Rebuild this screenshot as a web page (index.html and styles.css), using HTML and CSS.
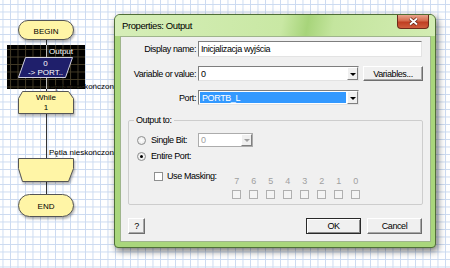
FILE: index.html
```html
<!DOCTYPE html>
<html lang="pl">
<head>
    <meta charset="UTF-8">
    <meta name="viewport" content="width=device-width, initial-scale=1.0">
    <title>Properties: Output</title>
    <link rel="stylesheet" href="styles.css">
</head>
<body>
    <!-- Schemat blokowy -->
    <svg class="chart" width="170" height="268" viewBox="0 0 170 268">
        <defs>
            <pattern id="darkGrid" width="7.5" height="7.5" patternUnits="userSpaceOnUse" x="2.5" y="4">
                <rect width="7.5" height="7.5" fill="#000"/>
                <path d="M0 0.5H7.5M0.5 0V7.5" stroke="#423a26"/>
            </pattern>
        </defs>

        <path class="link" d="M46.5 39V91M46.5 113V158M46.5 181V194"/>

        <rect class="node" x="18.5" y="20.5" width="55" height="19" rx="9.5"/>
        <text x="46" y="33.5">BEGIN</text>

        <!-- zaznaczony blok -->
        <rect x="7" y="45" width="78" height="44" fill="url(#darkGrid)"/>
        <path d="M46.5 45V57M46.5 77V89" stroke="#bbb"/>
        <text class="caption light" x="49" y="54">Output</text>
        <polygon class="io" points="25.5,57.5 72.5,57.5 65.5,77.5 18.5,77.5"/>
        <text class="light" x="45.5" y="65.5">0</text>
        <text class="light" x="45.5" y="75">-&gt; PORT..</text>
        <text class="caption" x="49" y="89">Pętla nieskończona</text>

        <polygon class="node" points="22.5,91.5 68.5,91.5 73.5,98.5 73.5,113.5 18.5,113.5 18.5,98.5"/>
        <text x="46" y="99.5">While</text>
        <text x="46" y="110">1</text>

        <text class="caption" x="49" y="155">Pętla nieskończona</text>
        <polygon class="node" points="18.5,158.5 73.5,158.5 73.5,168.5 68.5,181.5 22.5,181.5 18.5,168.5"/>

        <rect class="node" x="18.5" y="194.5" width="55" height="22" rx="11"/>
        <text x="46" y="208.5">END</text>
    </svg>

    <!-- Okno właściwości -->
    <div class="dialog">
        <div class="titlebar">
            <span class="title">Properties: Output</span>
            <button class="close">
                <svg width="11" height="9" viewBox="0 0 11 9">
                    <path d="M2 1.5L9 7.5M9 1.5L2 7.5" stroke="#5a2010" stroke-width="3.2"/>
                    <path d="M2 1.5L9 7.5M9 1.5L2 7.5" stroke="#fff" stroke-width="1.8"/>
                </svg>
            </button>
        </div>

        <div class="client">
            <div class="form">
                <label>Display name:</label>
                <div class="field wide">Inicjalizacja wyjścia</div>

                <label>Variable or value:</label>
                <div class="combo"><span class="value">0</span><span class="arrow"></span></div>
                <button class="btn vars">Variables...</button>

                <label>Port:</label>
                <div class="combo"><span class="value selected">PORTB_L</span><span class="arrow"></span></div>
            </div>

            <fieldset class="group">
                <legend>Output to:</legend>
                <div class="opt first">
                    <span class="radio"></span>
                    <span class="opt-label">Single Bit:</span>
                    <div class="combo small disabled"><span class="value">0</span><span class="arrow"></span></div>
                </div>
                <div class="opt">
                    <span class="radio on"></span>
                    <span>Entire Port:</span>
                </div>
                <div class="mask-row">
                    <div class="opt mask">
                        <span class="check"></span>
                        <span>Use Masking:</span>
                    </div>
                    <div class="bits">
                        <div class="bit"><span>7</span><span class="check"></span></div>
                        <div class="bit"><span>6</span><span class="check"></span></div>
                        <div class="bit"><span>5</span><span class="check"></span></div>
                        <div class="bit"><span>4</span><span class="check"></span></div>
                        <div class="bit"><span>3</span><span class="check"></span></div>
                        <div class="bit"><span>2</span><span class="check"></span></div>
                        <div class="bit"><span>1</span><span class="check"></span></div>
                        <div class="bit"><span>0</span><span class="check"></span></div>
                    </div>
                </div>
            </fieldset>

            <div class="actions">
                <button class="btn help">?</button>
                <button class="btn default">OK</button>
                <button class="btn">Cancel</button>
            </div>
        </div>
    </div>
</body>
</html>
```

FILE: styles.css
```css
* {
    box-sizing: border-box;
}

body {
    margin: 0;
    width: 450px;
    height: 268px;
    overflow: hidden;
    position: relative;
    font-family: "Liberation Sans", Arial, sans-serif;
    background-color: #fff;
    background-image:
        linear-gradient(#cbdaf0 1px, transparent 1px),
        linear-gradient(90deg, #cbdaf0 1px, transparent 1px);
    background-size: 7.5px 7.5px;
    background-position: 2.5px 4px;
}

/* schemat */
.chart {
    display: block;
}

.chart text {
    font-size: 8px;
    text-anchor: middle;
    fill: #000;
}

.chart .caption {
    text-anchor: start;
}

.chart .light {
    fill: #fff;
}

.node {
    fill: #fff5a6;
    stroke: #555;
    filter: drop-shadow(1px 2px 1px rgba(0,0,0,0.3));
}

.link {
    stroke: #333;
    fill: none;
}

.io {
    fill: #1f1f6b;
    stroke: #d0d0e0;
}

/* okno */
.dialog {
    position: absolute;
    left: 114px;
    top: 14px;
    width: 322px;
    height: 234px;
    display: flex;
    flex-direction: column;
    border: 1px solid #4f6e37;
    border-radius: 6px 6px 4px 4px;
    background: #a9d67c;
    box-shadow: 2px 3px 7px rgba(0,0,0,0.55);
    font-size: 9px;
    letter-spacing: -0.4px;
    color: #000;
}

.titlebar {
    height: 21px;
    display: flex;
    align-items: center;
    border-radius: 5px 5px 0 0;
    background: linear-gradient(100deg, #d6eeb8 0%, #c9e8a4 52%, #a7d47a 60%, #c4e59e 68%, #d3ecb3 100%);
}

.title {
    padding-left: 7px;
    font-size: 9.5px;
}

.close {
    align-self: flex-start;
    margin-left: auto;
    margin-right: 6px;
    width: 32px;
    height: 14px;
    padding: 0;
    display: flex;
    align-items: center;
    justify-content: center;
    border: 1px solid #6e2a1a;
    border-top: none;
    border-radius: 0 0 4px 4px;
    background: linear-gradient(#e9a48c, #d46a4c 45%, #bf3f22 55%, #cf5d3c);
}

.client {
    flex: 1;
    margin: 0 4px 5px 5px;
    display: flex;
    flex-direction: column;
    background: #f0f0f0;
    border: 1px solid #9fb58c;
}

.form {
    display: grid;
    grid-template-columns: 75px 161px 62px;
    grid-template-rows: 16px 15px 15px;
    column-gap: 2px;
    row-gap: 9px;
    margin-top: 4px;
}

.form label {
    text-align: right;
    align-self: center;
}

.field,
.combo {
    display: flex;
    align-items: center;
    background: #fff;
    border: 1px solid;
    border-color: #7e7e7e #e3e3e3 #e3e3e3 #7e7e7e;
}

.field {
    padding-left: 2px;
}

.wide {
    grid-column: 2 / 4;
    margin-right: 1px;
}

.combo .value {
    flex: 1;
    padding-left: 2px;
}

.combo .selected {
    align-self: stretch;
    display: flex;
    align-items: center;
    margin: 1px;
    background: #3399ff;
    color: #fff;
}

.arrow {
    width: 11px;
    align-self: stretch;
    display: flex;
    align-items: center;
    justify-content: center;
    background: #f0f0f0;
    border: 1px solid;
    border-color: #fff #808080 #808080 #fff;
}

.arrow::after {
    content: "";
    border: 3px solid transparent;
    border-top: 3px solid #000;
    border-bottom: 0;
    margin-top: 1px;
}

.btn {
    height: 16px;
    padding: 0;
    font: inherit;
    letter-spacing: inherit;
    color: #000;
    background: #f0f0f0;
    border: 1px solid;
    border-color: #fff #6e6e6e #6e6e6e #fff;
    box-shadow: inset -1px -1px #a8a8a8;
}

.vars {
    width: 60px;
    height: 15px;
    justify-self: end;
}

/* grupa */
.group {
    margin: 10px 7px 0 7px;
    padding: 0 0 5px 8px;
    border: 1px solid #cdcdcd;
    border-radius: 2px;
    min-width: 0;
}

.group legend {
    padding: 0 2px;
    margin-left: -3px;
    line-height: 10px;
    height: 10px;
}

.opt {
    display: flex;
    align-items: center;
    height: 14px;
}

.opt.first {
    margin-top: 8px;
}

.opt + .opt {
    margin-top: 2px;
}

.radio {
    width: 9px;
    height: 9px;
    margin-right: 5px;
    display: flex;
    align-items: center;
    justify-content: center;
    border: 1px solid #8e8f8f;
    border-radius: 50%;
    background: radial-gradient(#fff, #e2e2e2);
}

.radio.on::after {
    content: "";
    width: 3px;
    height: 3px;
    border-radius: 50%;
    background: #000;
}

.opt-label {
    width: 47px;
}

.combo.small {
    width: 55px;
    height: 14px;
}

.disabled {
    border-color: #acacac;
    color: #a0a0a0;
}

.disabled .arrow::after {
    border-top-color: #a0a0a0;
}

.check {
    width: 9px;
    height: 9px;
    margin-right: 4px;
    border: 1px solid #8e8f8f;
    background: #fff;
}

.mask-row {
    display: flex;
    align-items: flex-start;
    margin-top: 6px;
}

.mask {
    width: 95px;
    padding-left: 17px;
}

.bits {
    display: flex;
    gap: 8px;
    margin-top: 8px;
}

.bit {
    width: 9px;
    display: flex;
    flex-direction: column;
    align-items: center;
    gap: 4px;
    line-height: 9px;
    color: #a0a0a0;
}

.bit .check {
    margin: 0;
    border-color: #b0b0b0;
    background: #f4f4f4;
}

.actions {
    display: flex;
    gap: 6px;
    margin: 13px 8px 0 7px;
}

.actions .btn {
    width: 55px;
}

.actions .help {
    width: 17px;
    margin-right: auto;
}

.default {
    border-color: #2a2a2a;
    box-shadow: inset 1px 1px #fff, inset -1px -1px #8a8a8a;
}
```
